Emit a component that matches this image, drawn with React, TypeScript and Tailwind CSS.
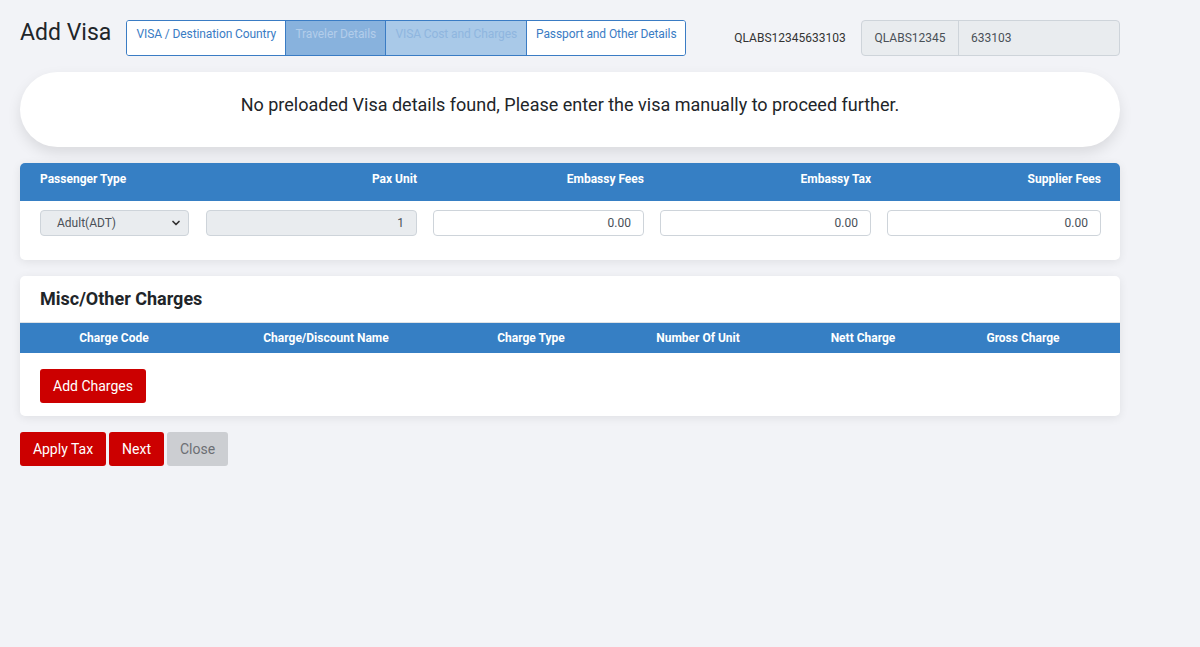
import { ChevronDown } from 'lucide-react';

const tabs = [
  { label: 'VISA / Destination Country', cls: 'bg-white text-[#3a7cc4] w-[158px]' },
  { label: 'Traveler Details', cls: 'bg-[#88b2dd] text-[#b3cdea] w-[100px]' },
  { label: 'VISA Cost and Charges', cls: 'bg-[#a9c9e8] text-[#8fb6df] w-[141px]' },
  { label: 'Passport and Other Details', cls: 'bg-white text-[#3a7cc4] w-[159px]' },
];

const chargeCols = [
  { label: 'Charge Code', w: 'w-[188px]' },
  { label: 'Charge/Discount Name', w: 'w-[236px]' },
  { label: 'Charge Type', w: 'w-[174px]' },
  { label: 'Number Of Unit', w: 'w-[160px]' },
  { label: 'Nett Charge', w: 'w-[170px]' },
  { label: 'Gross Charge', w: 'w-[150px]' },
];

function AmountInput({ value }: { value: string }) {
  return (
    <div className="flex h-[26px] w-[211px] items-center justify-end rounded-[4px] border border-[#ced4da] bg-white px-[12px] text-[12px] text-[#495057]">
      {value}
    </div>
  );
}

export default function App() {
  return (
    <div className="min-h-[647px] bg-[#f2f3f7] px-[20px] pt-[20px] font-['Roboto',sans-serif] text-[#212529]">
      <div className="flex w-[1100px] items-start">
        <h1 className="mr-[15px] text-[23px] leading-[26px] text-[#212529]">Add Visa</h1>
        <div className="flex h-[36px] overflow-hidden rounded-[3px] border border-[#3a7cc4]">
          {tabs.map((t, i) => (
            <div
              key={t.label}
              className={`flex items-start justify-center pt-[6px] text-[12px] leading-[14px] tracking-[-0.1px] ${t.cls} ${i > 0 ? 'border-l border-[#3a7cc4]' : ''}`}
            >
              {t.label}
            </div>
          ))}
        </div>
        <span className="ml-[48px] self-center text-[12px] text-[#333]">QLABS12345633103</span>
        <div className="ml-auto flex h-[36px] w-[259px] overflow-hidden rounded-[4px] border border-[#ced4da] bg-[#e9ecef] text-[12px] text-[#495057]">
          <div className="flex w-[97px] items-center justify-center border-r border-[#ced4da]">QLABS12345</div>
          <div className="flex items-center pl-[12px]">633103</div>
        </div>
      </div>

      <div className="mt-[16px] flex h-[75px] w-[1100px] items-center justify-center rounded-full bg-white pb-[10px] text-[18px] shadow-[0_6px_14px_rgba(0,0,0,0.1)]">
        No preloaded Visa details found, Please enter the visa manually to proceed further.
      </div>

      <div className="mt-[16px] w-[1100px] overflow-hidden rounded-[5px] bg-white shadow-[0_2px_10px_rgba(0,0,0,0.08)]">
        <div className="flex h-[38px] items-start bg-[#367fc4] pt-[7px] text-[12px] font-bold text-white">
          <div className="w-[186px] pl-[20px]">Passenger Type</div>
          <div className="w-[211px] text-right">Pax Unit</div>
          <div className="ml-[16px] w-[211px] text-right">Embassy Fees</div>
          <div className="ml-[16px] w-[211px] text-right">Embassy Tax</div>
          <div className="ml-[16px] w-[214px] text-right">Supplier Fees</div>
        </div>
        <div className="flex h-[59px] items-start pt-[9px]">
          <div className="ml-[20px] flex h-[26px] w-[149px] items-center justify-between rounded-[4px] border border-[#ced4da] bg-[#e9ecef] pl-[16px] pr-[6px] text-[12px] text-[#495057]">
            Adult(ADT)
            <ChevronDown className="h-[12px] w-[12px] text-[#333]" strokeWidth={3.5} />
          </div>
          <div className="ml-[17px] flex h-[26px] w-[211px] items-center justify-end rounded-[4px] border border-[#ced4da] bg-[#e9ecef] px-[12px] text-[12px] text-[#495057]">
            1
          </div>
          <div className="ml-[16px]"><AmountInput value="0.00" /></div>
          <div className="ml-[16px]"><AmountInput value="0.00" /></div>
          <div className="ml-[16px] flex h-[26px] w-[214px] items-center justify-end rounded-[4px] border border-[#ced4da] bg-white px-[12px] text-[12px] text-[#495057]">
            0.00
          </div>
        </div>
      </div>

      <div className="mt-[16px] w-[1100px] overflow-hidden rounded-[5px] bg-white shadow-[0_2px_10px_rgba(0,0,0,0.08)]">
        <div className="flex h-[47px] items-center border-b border-[#dee2e6] px-[20px] pb-[2px] text-[18px] font-bold text-[#212529]">
          Misc/Other Charges
        </div>
        <div className="flex h-[30px] items-center bg-[#367fc4] text-[12px] font-bold text-white">
          {chargeCols.map((c) => (
            <div key={c.label} className={`${c.w} text-center`}>{c.label}</div>
          ))}
        </div>
        <div className="h-[63px] px-[20px] pt-[16px]">
          <button className="h-[34px] w-[106px] rounded-[3px] bg-[#cc0000] text-[14px] text-white">Add Charges</button>
        </div>
      </div>

      <div className="mt-[16px] flex gap-[3px]">
        <button className="h-[34px] w-[86px] rounded-[3px] bg-[#cc0000] text-[14px] text-white">Apply Tax</button>
        <button className="h-[34px] w-[55px] rounded-[3px] bg-[#cc0000] text-[14px] text-white">Next</button>
        <button className="h-[34px] w-[61px] rounded-[3px] bg-[#ccced2] text-[14px] text-[#6c6f74]">Close</button>
      </div>
    </div>
  );
}
